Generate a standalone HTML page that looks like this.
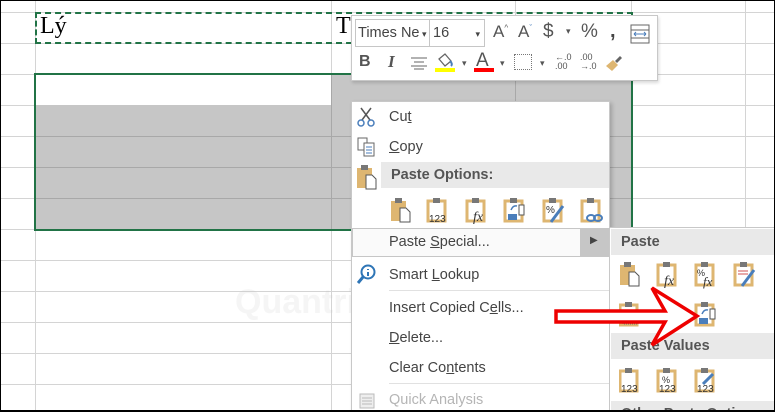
<!DOCTYPE html>
<html><head><meta charset="utf-8"><style>
*{margin:0;padding:0;box-sizing:border-box}
html{width:775px;height:412px;overflow:hidden}
body{width:775px;height:412px;overflow:hidden;background:#fff;position:relative;font-family:"Liberation Sans",sans-serif}
.a{position:absolute}
.h{position:absolute;left:0;width:775px;height:1px;background:#d4d4d4}
.v{position:absolute;top:0;height:412px;width:1px;background:#d4d4d4}
.mi{position:absolute;left:389px;font-size:14.5px;color:#444}
.sep{position:absolute;left:389px;width:220px;height:1px;background:#e1e1e1}
.hdr{position:absolute;background:#e9e9e9;font-weight:bold;font-size:14.5px;color:#555;padding-left:10px;line-height:26px}
u{text-decoration:underline}
</style></head><body>
<div class="h" style="top:12px"></div><div class="h" style="top:43px"></div><div class="h" style="top:74px"></div><div class="h" style="top:105px"></div><div class="h" style="top:136px"></div><div class="h" style="top:167px"></div><div class="h" style="top:198px"></div><div class="h" style="top:229px"></div><div class="h" style="top:260px"></div><div class="h" style="top:291px"></div><div class="h" style="top:322px"></div><div class="h" style="top:353px"></div><div class="h" style="top:384px"></div>
<div class="v" style="left:35px"></div><div class="v" style="left:331px"></div><div class="v" style="left:515px"></div><div class="v" style="left:631px"></div><div class="v" style="left:745px"></div>
<div class="a" style="left:36px;top:105px;width:595px;height:124px;background:#c6c6c6"></div>
<div class="a" style="left:332px;top:75px;width:299px;height:30px;background:#c6c6c6"></div>
<div class="a" style="left:36px;top:136px;width:595px;height:1px;background:#a8a8a8"></div>
<div class="a" style="left:36px;top:167px;width:595px;height:1px;background:#a8a8a8"></div>
<div class="a" style="left:36px;top:198px;width:595px;height:1px;background:#a8a8a8"></div>
<div class="a" style="left:331px;top:75px;width:1px;height:154px;background:#a8a8a8"></div>
<div class="a" style="left:515px;top:75px;width:1px;height:154px;background:#a8a8a8"></div>
<div class="a" style="left:34px;top:73px;width:599px;height:158px;border:2px solid #217346"></div>
<div class="a" style="left:35px;top:12px;width:598px;height:32px;border:2px dashed #217346"></div>
<div class="a" style="left:40px;top:13px;font-family:'Liberation Serif',serif;font-size:24px;color:#000">Lý</div>
<div class="a" style="left:336px;top:13px;font-family:'Liberation Serif',serif;font-size:24px;color:#000">T</div>
<div class="a" style="left:0;top:0;width:775px;height:412px;border:1px solid #000;border-bottom-width:2px;z-index:5;pointer-events:none"></div>
<div class="a" style="left:235px;top:283px;font-size:34px;color:rgba(200,200,200,.18);font-weight:bold">Quantrimang</div>
<!-- mini toolbar -->
<div class="a" style="left:351px;top:15px;width:307px;height:66px;background:#fff;border:1px solid #c8c8c8;box-shadow:1px 2px 3px rgba(0,0,0,.15)"></div>
<div class="a" style="left:355px;top:19px;width:75px;height:28px;border:1px solid #c6c6c6;font-size:14.5px;color:#444;padding:5px 2px;white-space:nowrap;overflow:hidden">Times Ne<span style="font-size:9px"> ▾</span></div>
<div class="a" style="left:429px;top:19px;width:56px;height:28px;border:1px solid #c6c6c6;font-size:14.5px;color:#444;padding:5px 3px">16<span style="font-size:9px;position:absolute;right:4px;top:9px">▾</span></div>
<div class="a" style="left:493px;top:22px;font-size:17px;color:#555">A<sup style="font-size:8px">^</sup></div>
<div class="a" style="left:518px;top:22px;font-size:17px;color:#555">A<sup style="font-size:8px;color:#4a7ebb">ˇ</sup></div>
<div class="a" style="left:543px;top:21px;font-size:19px;color:#555">$</div>
<div class="a" style="left:566px;top:26px;font-size:9px;color:#555">▾</div>
<div class="a" style="left:581px;top:21px;font-size:19px;color:#555">%</div>
<div class="a" style="left:610px;top:20px;font-size:20px;color:#444;font-weight:bold">,</div>
<svg class="a" style="left:630px;top:24px" width="20" height="20"><rect x="1" y="1" width="18" height="18" fill="none" stroke="#666"/><line x1="1" y1="6" x2="19" y2="6" stroke="#666"/><line x1="1" y1="14" x2="19" y2="14" stroke="#666"/><path d="M4 10H16M4 10l2-2M4 10l2 2M16 10l-2-2M16 10l-2 2" stroke="#4a7ebb" fill="none"/></svg>
<div class="a" style="left:359px;top:53px;font-size:16px;font-weight:bold;color:#555">B</div>
<div class="a" style="left:388px;top:52px;font-size:17px;font-style:italic;font-weight:bold;color:#555;font-family:'Liberation Serif',serif">I</div>
<svg class="a" style="left:410px;top:56px" width="18" height="14"><path d="M1 2H17M4 6H14M1 10H17M4 13H14" stroke="#666"/></svg>
<svg class="a" style="left:434px;top:53px" width="24" height="20"><path d="M5 6l6-5 6 7-6 5z" fill="none" stroke="#666" stroke-width="1.3"/><path d="M16 8q3 3 1 5" stroke="#4a7ebb" fill="none" stroke-width="2"/><rect x="1" y="15" width="20" height="4" fill="#ffff00"/></svg>
<div class="a" style="left:462px;top:58px;font-size:9px;color:#555">▾</div>
<div class="a" style="left:476px;top:50px;font-size:19px;color:#555">A</div>
<div class="a" style="left:474px;top:68px;width:20px;height:4px;background:#f00"></div>
<div class="a" style="left:500px;top:58px;font-size:9px;color:#555">▾</div>
<div class="a" style="left:514px;top:54px;width:18px;height:16px;border:1px dotted #777"></div>
<div class="a" style="left:540px;top:58px;font-size:9px;color:#555">▾</div>
<div class="a" style="left:555px;top:53px;font-size:9px;line-height:9px;color:#555">←.0<br>.00</div>
<div class="a" style="left:580px;top:53px;font-size:9px;line-height:9px;color:#555">.00<br>→.0</div>
<svg class="a" style="left:604px;top:54px" width="20" height="18"><path d="M2 12l7-6 5 5-6 6z" fill="#deb671"/><path d="M11 7l5-5 2 2-5 5z" fill="#666"/></svg>
<!-- context menu -->
<div class="a" style="left:351px;top:101px;width:259px;height:311px;background:#fff;border:1px solid #c8c8c8;border-bottom:none;box-shadow:2px 2px 4px rgba(0,0,0,.2)"></div>
<svg class="a" style="left:357px;top:107px" width="18" height="20"><path d="M4 1l9 12M14 1l-9 12" stroke="#555" stroke-width="1.5"/><circle cx="4" cy="16" r="3" fill="none" stroke="#4a7ebb" stroke-width="1.5"/><circle cx="14" cy="16" r="3" fill="none" stroke="#4a7ebb" stroke-width="1.5"/></svg>
<div class="mi" style="top:109px">Cu<u>t</u></div>
<svg class="a" style="left:357px;top:137px" width="18" height="20"><rect x="1" y="1" width="9" height="12" fill="#fff" stroke="#666"/><rect x="7" y="6" width="10" height="13" fill="#fff" stroke="#666"/><path d="M9 10h6M9 13h6M9 16h6" stroke="#4a7ebb"/></svg>
<div class="mi" style="top:139px"><u>C</u>opy</div>
<svg class="a" style="left:356px;top:164px" width="22" height="26"><rect x="1" y="4" width="15" height="20" fill="#deb671"/><rect x="5" y="1" width="7" height="5" fill="#777"/><path d="M10 11h6l4 4v10H10z" fill="#fff" stroke="#555"/></svg>
<div class="hdr" style="left:381px;top:162px;width:228px">Paste Options:</div>
<svg class="a" style="left:390px;top:196px" width="220" height="28">
<g><rect x="1" y="5" width="15" height="20" fill="#deb671"/><rect x="5" y="2" width="7" height="5" fill="#777"/><path d="M10 12h6l4 4v10H10z" fill="#fff" stroke="#555"/></g>
<g transform="translate(37,0)"><rect x="1" y="5" width="17" height="20" fill="#fff" stroke="#deb671" stroke-width="3"/><rect x="6" y="2" width="7" height="5" fill="#777"/><text x="2" y="26" font-size="10" font-family="Liberation Sans" fill="#333">123</text></g>
<g transform="translate(76,0)"><rect x="1" y="5" width="17" height="20" fill="#fff" stroke="#deb671" stroke-width="3"/><rect x="6" y="2" width="7" height="5" fill="#777"/><text x="7" y="25" font-size="14" font-style="italic" font-family="Liberation Serif" fill="#333">fx</text></g>
<g transform="translate(114,0)"><rect x="1" y="5" width="17" height="20" fill="#fff" stroke="#deb671" stroke-width="3"/><rect x="6" y="2" width="7" height="5" fill="#777"/><rect x="4" y="18" width="9" height="6" fill="#4a7ebb"/><rect x="15" y="9" width="5" height="10" fill="#fff" stroke="#555"/><path d="M7 14q2-5 6-4" stroke="#4a7ebb" fill="none" stroke-width="1.5"/></g>
<g transform="translate(153,0)"><rect x="1" y="5" width="17" height="20" fill="#fff" stroke="#deb671" stroke-width="3"/><rect x="6" y="2" width="7" height="5" fill="#777"/><text x="3" y="17" font-size="10" fill="#333" font-family="Liberation Sans">%</text><path d="M8 26l12-16" stroke="#4a7ebb" stroke-width="3"/></g>
<g transform="translate(191,0)"><rect x="1" y="5" width="17" height="20" fill="#fff" stroke="#deb671" stroke-width="3"/><rect x="6" y="2" width="7" height="5" fill="#777"/><ellipse cx="10" cy="22" rx="4" ry="3" fill="none" stroke="#4a7ebb" stroke-width="2"/><ellipse cx="17" cy="22" rx="4" ry="3" fill="none" stroke="#4a7ebb" stroke-width="2"/></g>
</svg>
<div class="a" style="left:352px;top:228px;width:257px;height:29px;border:1px solid #c6c6c6;background:#fafafa"></div>
<div class="a" style="left:580px;top:229px;width:29px;height:27px;background:#c6c6c6"></div>
<div class="a" style="left:590px;top:235px;font-size:10px;color:#444">▶</div>
<div class="mi" style="top:234px">Paste <u>S</u>pecial...</div>
<svg class="a" style="left:357px;top:264px" width="20" height="20"><circle cx="11" cy="8" r="6.5" fill="#fff" stroke="#2e75b6" stroke-width="2"/><path d="M6 13L1 19" stroke="#2e75b6" stroke-width="3"/><path d="M11 5v1M11 8v4" stroke="#2e75b6" stroke-width="2"/></svg>
<div class="mi" style="top:267px">Smart <u>L</u>ookup</div>
<div class="sep" style="top:290px"></div>
<div class="mi" style="top:300px">Insert Copied C<u>e</u>lls...</div>
<div class="mi" style="top:330px"><u>D</u>elete...</div>
<div class="mi" style="top:360px">Clear Co<u>n</u>tents</div>
<div class="sep" style="top:383px"></div>
<svg class="a" style="left:356px;top:392px" width="20" height="18"><rect x="4" y="2" width="14" height="14" fill="#eee" stroke="#bbb"/><path d="M6 6h10M6 9h10M6 12h10" stroke="#bbb"/></svg>
<div class="mi" style="top:392px;color:#b5b5b5">Quick Analysis</div>
<!-- submenu -->
<div class="a" style="left:609px;top:227px;width:166px;height:185px;background:#fff;border:1px solid #c8c8c8;border-right:none;border-bottom:none"></div>
<div class="hdr" style="left:611px;top:229px;width:164px;height:26px">Paste</div>
<div class="hdr" style="left:611px;top:333px;width:164px;height:26px">Paste Values</div>
<div class="hdr" style="left:611px;top:401px;width:164px;height:11px;overflow:hidden">Other Paste Options</div>
<svg class="a" style="left:619px;top:260px" width="140" height="140">
<g><rect x="1" y="5" width="15" height="20" fill="#deb671"/><rect x="5" y="2" width="7" height="5" fill="#777"/><path d="M10 12h6l4 4v10H10z" fill="#fff" stroke="#555"/></g>
<g transform="translate(38,0)"><rect x="1" y="5" width="17" height="20" fill="#fff" stroke="#deb671" stroke-width="3"/><rect x="6" y="2" width="7" height="5" fill="#777"/><text x="7" y="25" font-size="14" font-style="italic" font-family="Liberation Serif" fill="#333">fx</text></g>
<g transform="translate(76,0)"><rect x="1" y="5" width="17" height="20" fill="#fff" stroke="#deb671" stroke-width="3"/><rect x="6" y="2" width="7" height="5" fill="#777"/><text x="2" y="16" font-size="9" fill="#333">%</text><text x="8" y="26" font-size="13" font-style="italic" font-family="Liberation Serif" fill="#333">fx</text></g>
<g transform="translate(115,0)"><rect x="1" y="5" width="17" height="20" fill="#fff" stroke="#deb671" stroke-width="3"/><rect x="6" y="2" width="7" height="5" fill="#777"/><path d="M4 11h10M4 14h10" stroke="#d05050"/><path d="M8 26l12-16" stroke="#4a7ebb" stroke-width="3"/></g>
<g transform="translate(0,40)"><rect x="1" y="5" width="17" height="20" fill="#fff" stroke="#deb671" stroke-width="3"/><rect x="6" y="2" width="7" height="5" fill="#777"/><rect x="4" y="14" width="15" height="10" fill="none" stroke="#777" stroke-dasharray="1,1"/></g>
<g transform="translate(76,40)"><rect x="1" y="5" width="17" height="20" fill="#fff" stroke="#deb671" stroke-width="3"/><rect x="6" y="2" width="7" height="5" fill="#777"/><rect x="4" y="18" width="9" height="6" fill="#4a7ebb"/><rect x="15" y="9" width="5" height="10" fill="#fff" stroke="#555"/><path d="M7 14q2-5 6-4" stroke="#4a7ebb" fill="none" stroke-width="1.5"/></g>
<g transform="translate(0,106)"><rect x="1" y="5" width="17" height="20" fill="#fff" stroke="#deb671" stroke-width="3"/><rect x="6" y="2" width="7" height="5" fill="#777"/><text x="2" y="26" font-size="10" fill="#333">123</text></g>
<g transform="translate(38,106)"><rect x="1" y="5" width="17" height="20" fill="#fff" stroke="#deb671" stroke-width="3"/><rect x="6" y="2" width="7" height="5" fill="#777"/><text x="5" y="17" font-size="9" fill="#333">%</text><text x="2" y="26" font-size="10" fill="#333">123</text></g>
<g transform="translate(76,106)"><rect x="1" y="5" width="17" height="20" fill="#fff" stroke="#deb671" stroke-width="3"/><rect x="6" y="2" width="7" height="5" fill="#777"/><path d="M8 18l10-10" stroke="#4a7ebb" stroke-width="3"/><text x="2" y="26" font-size="10" fill="#333">123</text></g>
</svg>
<svg class="a" style="left:0;top:0" width="775" height="412"><polygon points="556,311 665,311 652,288 697,316 652,345 665,322 556,322" fill="#fff" stroke="#ee0000" stroke-width="3.5" stroke-linejoin="miter"/></svg>
</body></html>
